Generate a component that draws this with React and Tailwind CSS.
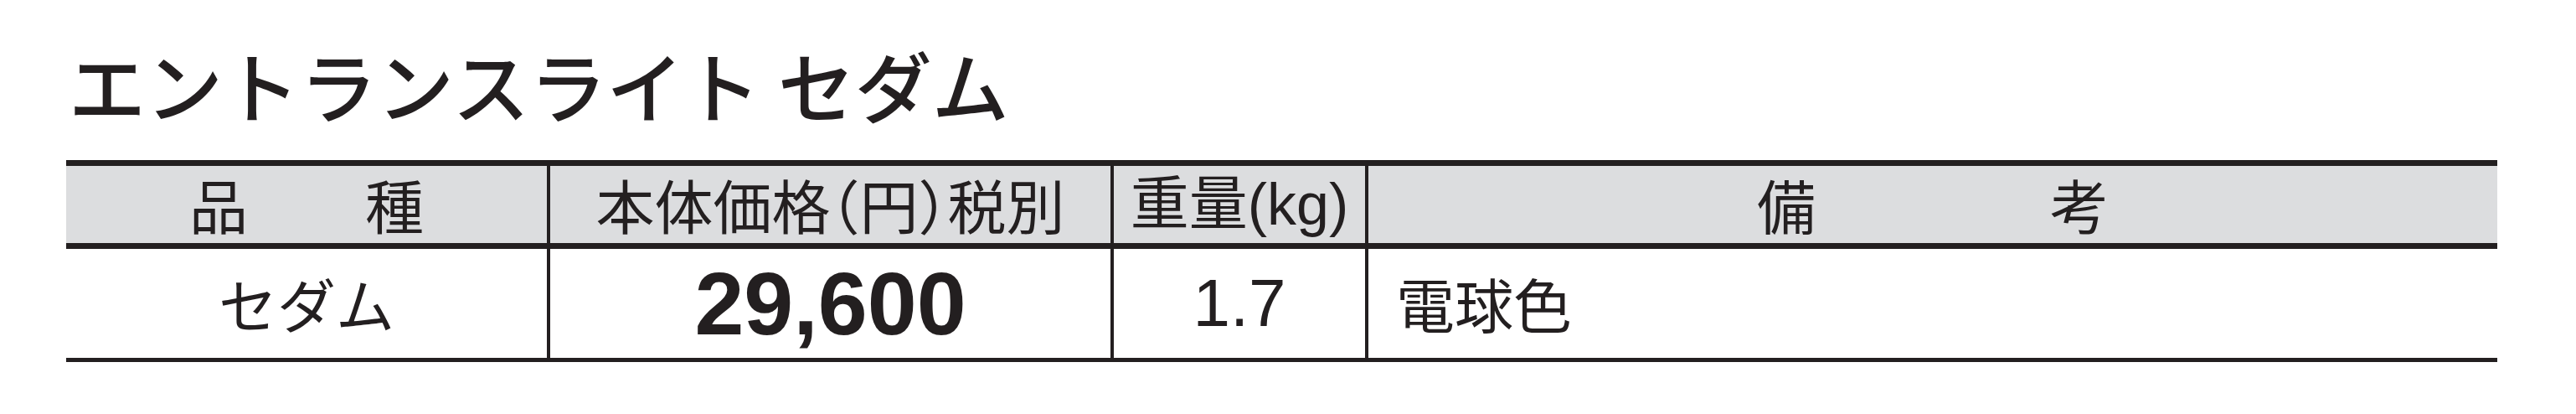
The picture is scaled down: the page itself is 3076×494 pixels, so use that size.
import React from "react";

export default function App() {
  const jp = "font-['Noto_Sans_CJK_JP',sans-serif]";
  return (
    <div className="w-[3076px] h-[494px] bg-white text-[#231f20] overflow-hidden">
      <div className="pl-[79px] pt-[54px]">
        <h1 className={`${jp} text-[92px] leading-none font-medium h-[92px] pl-[3px] whitespace-nowrap`}>
          エントランスライト セダム
        </h1>
        <div className="mt-[45px] w-[2903px] border-t-[7px] border-b-[5px] border-[#231f20]">
          <div className="grid grid-cols-[578px_673px_304px_1fr] h-[99px] bg-[#dcdddf] border-b-[7px] border-[#231f20]">
            <div className={`${jp} flex items-center justify-center border-r-4 border-[#231f20] text-[70px] leading-none whitespace-pre`}>
              品　　種
            </div>
            <div className={`${jp} flex items-center justify-center border-r-4 border-[#231f20] text-[70px] leading-none whitespace-pre [font-feature-settings:'halt']`}>
              本体価格（円）税別
            </div>
            <div className="font-['Liberation_Sans','Noto_Sans_CJK_JP',sans-serif] flex items-center justify-center border-r-4 border-[#231f20] text-[70px] leading-none whitespace-pre">
              重量(kg)
            </div>
            <div className={`${jp} flex items-center justify-center text-[70px] leading-none whitespace-pre`}>
              備　　　　考
            </div>
          </div>
          <div className="grid grid-cols-[578px_673px_304px_1fr] h-[130px]">
            <div className={`${jp} flex items-center justify-center border-r-4 border-[#231f20] text-[70px] leading-none`}>
              セダム
            </div>
            <div className="font-['Liberation_Sans',sans-serif] font-bold flex items-center justify-center border-r-4 border-[#231f20] text-[106px] leading-none">
              29,600
            </div>
            <div className="font-['Liberation_Sans',sans-serif] flex items-center justify-center border-r-4 border-[#231f20] text-[80px] leading-none">
              1.7
            </div>
            <div className={`${jp} flex items-center pl-[33px] text-[70px] leading-none`}>
              電球色
            </div>
          </div>
        </div>
      </div>
    </div>
  );
}
